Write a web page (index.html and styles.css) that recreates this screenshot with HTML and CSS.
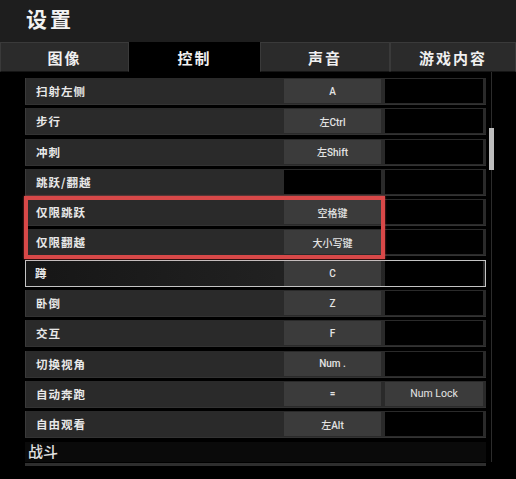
FILE: index.html
```html
<!DOCTYPE html>
<html lang="zh-CN">
<head>
<meta charset="utf-8">
<link rel="stylesheet" href="styles.css">
</head>
<body>
<header class="top">
  <h1 class="title">设置</h1>
</header>
<nav class="tabs">
  <div class="tab">图像</div>
  <div class="tab active">控制</div>
  <div class="tab">声音</div>
  <div class="tab">游戏内容</div>
</nav>
<main class="main">
  <section class="list">
    <div class="row"><span class="label">扫射左侧</span><span class="key">A</span><span class="key2"></span></div>
    <div class="row"><span class="label">步行</span><span class="key">左Ctrl</span><span class="key2"></span></div>
    <div class="row"><span class="label">冲刺</span><span class="key">左Shift</span><span class="key2"></span></div>
    <div class="row"><span class="label">跳跃/翻越</span><span class="key empty"></span><span class="key2"></span></div>
    <div class="mark">
      <div class="row"><span class="label">仅限跳跃</span><span class="key">空格键</span><span class="key2"></span></div>
      <div class="row"><span class="label">仅限翻越</span><span class="key">大小写键</span><span class="key2"></span></div>
    </div>
    <div class="row selected"><span class="label">蹲</span><span class="key">C</span><span class="key2"></span></div>
    <div class="row"><span class="label">卧倒</span><span class="key">Z</span><span class="key2"></span></div>
    <div class="row"><span class="label">交互</span><span class="key">F</span><span class="key2"></span></div>
    <div class="row"><span class="label">切换视角</span><span class="key">Num .</span><span class="key2"></span></div>
    <div class="row"><span class="label">自动奔跑</span><span class="key">=</span><span class="key2 set">Num Lock</span></div>
    <div class="row"><span class="label">自由观看</span><span class="key">左Alt</span><span class="key2"></span></div>
    <h2 class="section">战斗</h2>
    <div class="row stub"></div>
  </section>
  <div class="scroll"><div class="thumb"></div></div>
</main>
</body>
</html>
```
FILE: styles.css
```css
html, body {
  margin: 0;
  padding: 0;
  background: #000;
  width: 516px;
  height: 479px;
  overflow: hidden;
  font-family: "Noto Sans CJK SC", "Noto Sans", sans-serif;
  color: #e6e6e6;
}
.top {
  height: 42px;
  background: #1e1e1e;
  display: flex;
  align-items: center;
  padding-left: 26px;
  box-sizing: border-box;
}
.title {
  margin: 0;
  font-size: 21px;
  font-weight: 700;
  letter-spacing: 3px;
  color: #f2f2f2;
  line-height: 1;
  margin-top: -6px;
}
.tabs {
  display: grid;
  grid-template-columns: 129px 131px 130px 126px;
  height: 30px;
  background: #1e1e1e;
}
.tab {
  display: flex;
  align-items: center;
  justify-content: center;
  background: #2b2b2b;
  border: 1px solid #3a3a3a;
  border-bottom-color: #151515;
  box-sizing: border-box;
  font-size: 15px;
  font-weight: 700;
  letter-spacing: 2px;
  color: #f0f0f0;
}
.tab.active {
  background: #000;
  border-color: #000;
}
.main {
  display: flex;
  align-items: flex-start;
}
.list {
  margin-left: 25px;
  width: 461px;
  padding-top: 6px;
}
.row {
  height: 27px;
  margin-bottom: 3.3px;
  background: #2a2a2a;
  display: flex;
  align-items: stretch;
  box-sizing: border-box;
  padding: 1px 2px 1px 0;
  border-left: 1px solid #3a3a3a;
  border-bottom: 1px solid #333;
}
.label {
  flex: 0 0 258px;
  display: flex;
  align-items: center;
  padding-left: 10px;
  box-sizing: border-box;
  font-size: 11.5px;
  font-weight: 700;
  letter-spacing: 1px;
  color: #e8e8e8;
}
.key {
  flex: 0 0 97px;
  background: #3b3b3b;
  display: flex;
  align-items: center;
  justify-content: center;
  font-family: Roboto, "Noto Sans CJK SC", sans-serif;
  font-size: 10px;
  font-weight: 500;
  color: #e4e4e4;
}
.key.empty { background: #000; }
.key2 {
  flex: 0 0 98px;
  margin-left: 4px;
  background: #000;
  display: flex;
  align-items: center;
  justify-content: center;
  font-family: Roboto, sans-serif;
  font-size: 10.5px;
  color: #e4e4e4;
}
.key2.set { background: #3b3b3b; }
.mark {
  position: relative;
}
.mark::after {
  content: "";
  position: absolute;
  left: -1px;
  right: 101px;
  top: -3px;
  bottom: -3px;
  border: 4px solid #d84848;
  box-shadow: 0 0 2px rgba(216, 72, 72, 0.7);
  pointer-events: none;
}
.row.selected {
  background: linear-gradient(to right, #161616, #2a2a2a);
  border: 1px solid #c4c4c4;
  padding: 0 1px 0 0;
}
.row.selected .label { padding-left: 9px; }
.section {
  margin: 0;
  height: 20px;
  padding-left: 3px;
  font-size: 15px;
  font-weight: 500;
  color: #e0e0e0;
  line-height: 18px;
  background: #0a0a0a;
}
.row.stub {
  height: 3px;
  background: #2e2e2e;
  margin-top: 1px;
  border: 0;
}
.scroll {
  width: 5px;
  height: 390px;
  position: relative;
  border-left: 1px solid #2c2c2c;
  margin-left: 5px;
  box-sizing: border-box;
}
.thumb {
  position: absolute;
  left: -3px;
  top: 56px;
  width: 5px;
  height: 42px;
  background: #bdbdbd;
}
```
